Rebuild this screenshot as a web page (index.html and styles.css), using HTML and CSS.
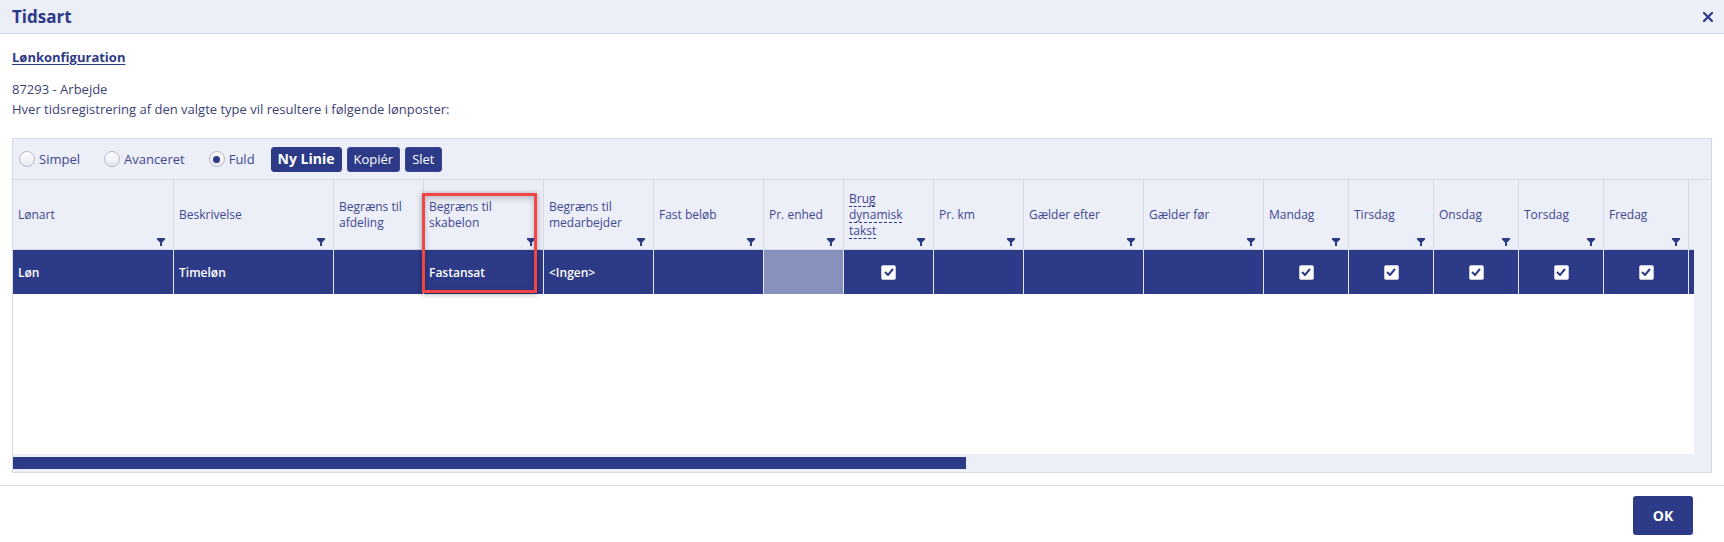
FILE: index.html
```html
<!DOCTYPE html>
<html lang="da">
<head>
<meta charset="utf-8">
<title>Tidsart</title>
<link rel="stylesheet" href="styles.css">
</head>
<body>
<header class="titlebar">
  <h1 class="title">Tidsart</h1>
  <button class="close" aria-label="Luk">
    <svg width="10" height="10" viewBox="0 0 10 10"><path d="M1 1L9 9M9 1L1 9" stroke="#2d3a87" stroke-width="2.2" stroke-linecap="square"/></svg>
  </button>
</header>
<main class="content">
  <h2 class="section">Lønkonfiguration</h2>
  <p class="desc">87293 - Arbejde<br>Hver tidsregistrering af den valgte type vil resultere i følgende lønposter:</p>
  <div class="grid">
    <div class="toolbar">
      <label class="radio"><span class="circle"></span>Simpel</label>
      <label class="radio"><span class="circle"></span>Avanceret</label>
      <label class="radio last"><span class="circle on"></span>Fuld</label>
      <button class="btn btn-new">Ny Linie</button>
      <button class="btn">Kopiér</button>
      <button class="btn">Slet</button>
    </div>
    <div class="grid-main">
      <div class="viewport">
        <div class="row head">
          <div class="hcell"><span class="label">Lønart</span><svg class="filter" viewBox="0 0 8 8"><path d="M0 0H8V1.6L5 4.4V8H3V4.4L0 1.6Z"/></svg></div>
          <div class="hcell"><span class="label">Beskrivelse</span><svg class="filter" viewBox="0 0 8 8"><path d="M0 0H8V1.6L5 4.4V8H3V4.4L0 1.6Z"/></svg></div>
          <div class="hcell"><span class="label">Begræns til afdeling</span></div>
          <div class="hcell"><span class="label">Begræns til skabelon</span><svg class="filter" viewBox="0 0 8 8"><path d="M0 0H8V1.6L5 4.4V8H3V4.4L0 1.6Z"/></svg></div>
          <div class="hcell"><span class="label">Begræns til medarbejder</span><svg class="filter" viewBox="0 0 8 8"><path d="M0 0H8V1.6L5 4.4V8H3V4.4L0 1.6Z"/></svg></div>
          <div class="hcell"><span class="label">Fast beløb</span><svg class="filter" viewBox="0 0 8 8"><path d="M0 0H8V1.6L5 4.4V8H3V4.4L0 1.6Z"/></svg></div>
          <div class="hcell"><span class="label">Pr. enhed</span><svg class="filter" viewBox="0 0 8 8"><path d="M0 0H8V1.6L5 4.4V8H3V4.4L0 1.6Z"/></svg></div>
          <div class="hcell"><span class="label"><span class="abbr">Brug</span> <span class="abbr">dynamisk</span> <span class="abbr">takst</span></span><svg class="filter" viewBox="0 0 8 8"><path d="M0 0H8V1.6L5 4.4V8H3V4.4L0 1.6Z"/></svg></div>
          <div class="hcell"><span class="label">Pr. km</span><svg class="filter" viewBox="0 0 8 8"><path d="M0 0H8V1.6L5 4.4V8H3V4.4L0 1.6Z"/></svg></div>
          <div class="hcell"><span class="label">Gælder efter</span><svg class="filter" viewBox="0 0 8 8"><path d="M0 0H8V1.6L5 4.4V8H3V4.4L0 1.6Z"/></svg></div>
          <div class="hcell"><span class="label">Gælder før</span><svg class="filter" viewBox="0 0 8 8"><path d="M0 0H8V1.6L5 4.4V8H3V4.4L0 1.6Z"/></svg></div>
          <div class="hcell"><span class="label">Mandag</span><svg class="filter" viewBox="0 0 8 8"><path d="M0 0H8V1.6L5 4.4V8H3V4.4L0 1.6Z"/></svg></div>
          <div class="hcell"><span class="label">Tirsdag</span><svg class="filter" viewBox="0 0 8 8"><path d="M0 0H8V1.6L5 4.4V8H3V4.4L0 1.6Z"/></svg></div>
          <div class="hcell"><span class="label">Onsdag</span><svg class="filter" viewBox="0 0 8 8"><path d="M0 0H8V1.6L5 4.4V8H3V4.4L0 1.6Z"/></svg></div>
          <div class="hcell"><span class="label">Torsdag</span><svg class="filter" viewBox="0 0 8 8"><path d="M0 0H8V1.6L5 4.4V8H3V4.4L0 1.6Z"/></svg></div>
          <div class="hcell"><span class="label">Fredag</span><svg class="filter" viewBox="0 0 8 8"><path d="M0 0H8V1.6L5 4.4V8H3V4.4L0 1.6Z"/></svg></div>
          <div class="hcell"></div>
        </div>
        <div class="body">
          <div class="row data">
            <div class="dcell">Løn</div>
            <div class="dcell">Timeløn</div>
            <div class="dcell"></div>
            <div class="dcell">Fastansat</div>
            <div class="dcell">&lt;Ingen&gt;</div>
            <div class="dcell"></div>
            <div class="dcell muted"></div>
            <div class="dcell center"><span class="chk"><svg width="10" height="8" viewBox="0 0 10 8"><path d="M1 4L4 7L9 1" fill="none" stroke="#2d3a87" stroke-width="2"/></svg></span></div>
            <div class="dcell"></div>
            <div class="dcell"></div>
            <div class="dcell"></div>
            <div class="dcell center"><span class="chk"><svg width="10" height="8" viewBox="0 0 10 8"><path d="M1 4L4 7L9 1" fill="none" stroke="#2d3a87" stroke-width="2"/></svg></span></div>
            <div class="dcell center"><span class="chk"><svg width="10" height="8" viewBox="0 0 10 8"><path d="M1 4L4 7L9 1" fill="none" stroke="#2d3a87" stroke-width="2"/></svg></span></div>
            <div class="dcell center"><span class="chk"><svg width="10" height="8" viewBox="0 0 10 8"><path d="M1 4L4 7L9 1" fill="none" stroke="#2d3a87" stroke-width="2"/></svg></span></div>
            <div class="dcell center"><span class="chk"><svg width="10" height="8" viewBox="0 0 10 8"><path d="M1 4L4 7L9 1" fill="none" stroke="#2d3a87" stroke-width="2"/></svg></span></div>
            <div class="dcell center"><span class="chk"><svg width="10" height="8" viewBox="0 0 10 8"><path d="M1 4L4 7L9 1" fill="none" stroke="#2d3a87" stroke-width="2"/></svg></span></div>
            <div class="dcell"></div>
          </div>
        </div>
        <div class="highlight"></div>
      </div>
      <div class="vscroll"></div>
    </div>
    <div class="hscroll"><div class="thumb"></div></div>
  </div>
</main>
<footer class="footer">
  <button class="ok">OK</button>
</footer>
</body>
</html>
```

FILE: styles.css
```css
* { box-sizing: border-box; }

body {
  margin: 0;
  width: 1724px;
  height: 542px;
  overflow: hidden;
  background: #fff;
  font-family: "Open Sans", "Liberation Sans", sans-serif;
  color: #3b4276;
}

.titlebar {
  height: 34px;
  background: #eceef8;
  border-bottom: 1px solid #d6d9e8;
  display: flex;
  align-items: center;
  justify-content: space-between;
  padding: 0 11px 0 12px;
}

.title {
  margin: 0;
  font-size: 17px;
  font-weight: 700;
  line-height: 1;
  color: #2d3a87;
}

.close {
  width: 10px;
  height: 10px;
  padding: 0;
  border: 0;
  background: none;
  display: flex;
}

.content {
  padding: 14px 12px 0;
}

.section {
  margin: 0;
  font-size: 13px;
  font-weight: 700;
  line-height: 18px;
  color: #2d3a87;
  text-decoration: underline;
  text-underline-offset: 2px;
}

.desc {
  margin: 13px 0 0;
  font-size: 13px;
  line-height: 20px;
  color: #3b4276;
}

.grid {
  margin-top: 19px;
  border: 1px solid #d6d9e6;
  background: #eceef8;
}

.toolbar {
  height: 41px;
  border-bottom: 1px solid #d6d9e6;
  display: flex;
  align-items: center;
  padding-left: 6px;
}

.radio {
  display: flex;
  align-items: center;
  font-size: 13px;
  color: #3e4890;
  margin-right: 24px;
}

.radio.last { margin-right: 16px; }

.circle {
  width: 16px;
  height: 16px;
  border-radius: 50%;
  border: 1px solid #b8bbcb;
  background: linear-gradient(#ffffff, #e6e8ef);
  margin-right: 4px;
  display: grid;
  place-items: center;
}

.circle.on::after {
  content: "";
  width: 7px;
  height: 7px;
  border-radius: 50%;
  background: #2d3a87;
}

.btn {
  height: 25px;
  padding: 0 6px;
  margin-right: 5px;
  background: #2d3a87;
  color: #fff;
  border: 1px solid #3b4796;
  border-radius: 3px;
  font-family: "Open Sans", "Liberation Sans", sans-serif;
  font-size: 13px;
  line-height: 1;
}

.btn-new {
  padding: 0 6px;
  font-size: 14px;
  font-weight: 700;
  border-color: #2d3a87;
}

.grid-main {
  display: flex;
}

.viewport {
  position: relative;
  width: 1681px;
  overflow: hidden;
}

.vscroll { flex: 1; }

.row {
  display: grid;
  grid-template-columns: 161px 160px 90px 120px 110px 110px 80px 90px 90px 120px 120px 85px 85px 85px 85px 85px 85px;
  width: 1761px;
}

.head {
  height: 70px;
  border-bottom: 1px solid #d6d9e6;
}

.hcell {
  display: grid;
  border-right: 1px solid #d6d9e6;
  padding: 0 5px;
  font-size: 12px;
  line-height: 16px;
  color: #3e4890;
}

.hcell .label {
  grid-area: 1 / 1;
  align-self: center;
  padding-right: 12px;
}

.hcell .filter {
  grid-area: 1 / 1;
  align-self: end;
  justify-self: end;
  width: 8px;
  height: 8px;
  margin: 0 3px 3px 0;
  fill: #2d3a87;
}

.abbr {
  text-decoration: underline dashed #2d3a87;
  text-decoration-thickness: 1px;
  text-underline-offset: 3px;
}

.body {
  height: 204px;
  background: #fff;
}

.data {
  height: 44px;
  background: #2d3a87;
  color: #fff;
  font-size: 12px;
  font-weight: 600;
}

.dcell {
  display: flex;
  align-items: center;
  padding: 0 5px;
  border-right: 1px solid #e3e5f0;
}

.dcell.center { justify-content: center; }

.dcell.muted { background: #8791bb; }

.chk {
  width: 15px;
  height: 15px;
  background: #fff;
  border: 1px solid #c3c7d6;
  border-radius: 2px;
  display: grid;
  place-items: center;
}

.highlight {
  position: absolute;
  left: 409px;
  top: 13px;
  width: 115px;
  height: 100px;
  border: 3px solid #f04646;
  box-shadow: 0 1px 6px rgba(0, 0, 0, 0.35), inset 0 2px 6px rgba(0, 0, 0, 0.22);
  pointer-events: none;
}

.hscroll {
  height: 18px;
  padding-top: 3px;
}

.thumb {
  width: 953px;
  height: 12px;
  background: #2d3a87;
}

.footer {
  margin-top: 12px;
  border-top: 1px solid #dcdee6;
  display: flex;
  justify-content: flex-end;
  padding: 10px 31px 0 0;
}

.ok {
  width: 60px;
  height: 39px;
  background: #2d3a87;
  color: #fff;
  border: 0;
  border-radius: 3px;
  font-family: "Open Sans", "Liberation Sans", sans-serif;
  font-size: 14px;
  font-weight: 700;
}
```
